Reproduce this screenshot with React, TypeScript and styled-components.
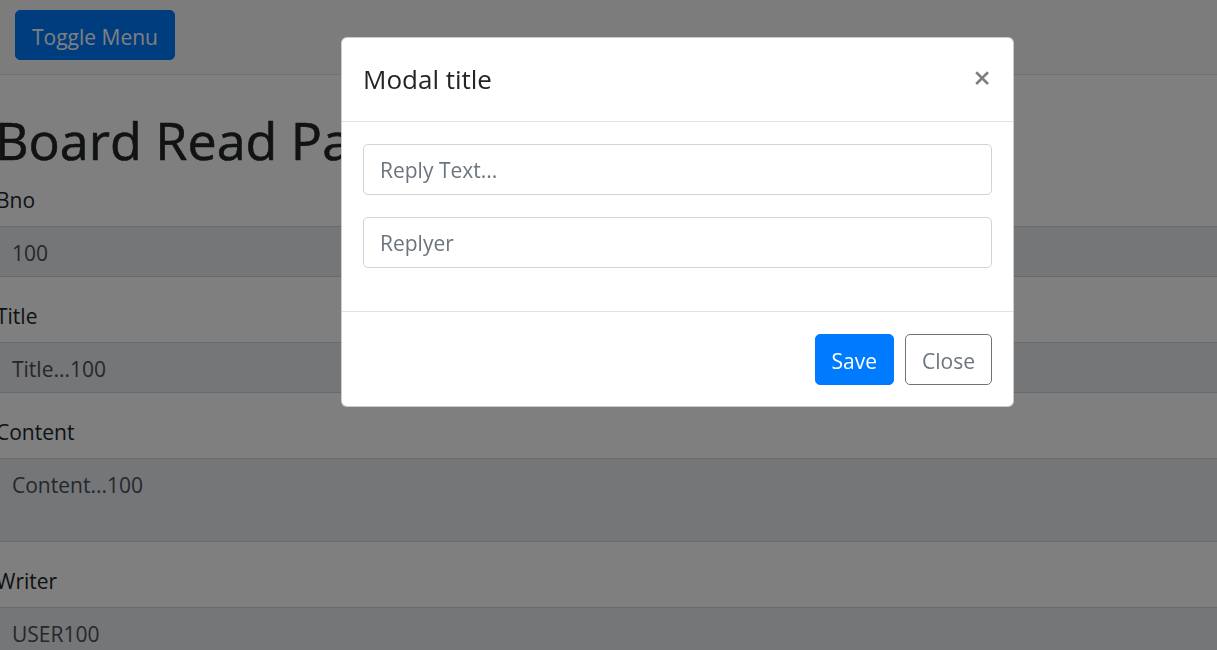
import React from "react";
import styled, { createGlobalStyle } from "styled-components";

const Global = createGlobalStyle`
  * { box-sizing: border-box; }
  html, body { margin: 0; padding: 0; height: 100%; overflow: hidden; }
  body {
    font-family: "Open Sans", "Noto Sans", sans-serif;
    font-size: 21px;
    line-height: 1.5;
    color: #212529;
    background: #fff;
  }
`;

const Navbar = styled.nav`
  height: 75px;
  background: #f8f9fa;
  border-bottom: 1px solid #dee2e6;
  padding: 10px 15px;
  display: flex;
  align-items: flex-start;
`;

const Button = styled.button<{ $variant: "primary" | "outline" }>`
  height: 51px;
  padding: 3px 16px 0;
  font-family: inherit;
  font-size: 21px;
  line-height: 1;
  border-radius: 5px;
  border: 1px solid ${(p) => (p.$variant === "primary" ? "#007bff" : "#6c757d")};
  background: ${(p) => (p.$variant === "primary" ? "#007bff" : "transparent")};
  color: ${(p) => (p.$variant === "primary" ? "#fff" : "#6c757d")};
  cursor: pointer;
`;

const ToggleButton = styled(Button)`
  width: 160px;
  height: 50px;
  padding-top: 4px;
`;

const Main = styled.main`
  margin: 0 -30px 0 -5px;
  padding-top: 33px;
`;

const Heading = styled.h1`
  font-size: 52px;
  font-weight: 500;
  line-height: 63px;
  margin: 0 0 13px;
  color: #212529;
  -webkit-text-stroke: 0.6px #212529;
`;

const FormGroup = styled.div<{ $mb?: number }>`
  margin-bottom: ${(p) => p.$mb ?? 23}px;
`;

const Label = styled.label`
  display: block;
  font-size: 21px;
  line-height: 32px;
  margin-bottom: 10px;
  padding-left: 1px;
`;

const Field = styled.div<{ $tall?: boolean }>`
  height: ${(p) => (p.$tall ? 84 : 51)}px;
  padding: 10px 16px 6px;
  font-size: 21px;
  line-height: 32px;
  color: #495057;
  background: #e9ecef;
  border: 1px solid #ced4da;
  border-radius: 5px;
`;

const Backdrop = styled.div`
  position: fixed;
  inset: 0;
  background: rgba(0, 0, 0, 0.5);
`;

const Modal = styled.div`
  position: fixed;
  top: 37px;
  left: 341px;
  width: 673px;
  background: #fff;
  border: 1px solid rgba(0, 0, 0, 0.2);
  border-radius: 6px;
  display: flex;
  flex-direction: column;
`;

const ModalHeader = styled.div`
  display: flex;
  align-items: flex-start;
  padding: 21px;
  border-bottom: 1px solid #dee2e6;
`;

const ModalTitle = styled.h5`
  margin: 0;
  font-size: 26px;
  font-weight: 400;
  line-height: 41px;
  color: #212529;
`;

const CloseX = styled.button`
  margin: -18px -20px -21px auto;
  padding: 21px;
  background: transparent;
  border: 0;
  font-family: inherit;
  font-size: 31px;
  font-weight: 600;
  line-height: 1;
  color: #000;
  opacity: 0.5;
`;

const ModalBody = styled.div`
  padding: 22px 21px 21px;
`;

const Input = styled.input`
  display: block;
  width: 100%;
  height: 51px;
  padding: 8px 16px;
  font-family: inherit;
  font-size: 21px;
  color: #495057;
  background: #fff;
  border: 1px solid #ced4da;
  border-radius: 5px;
  &::placeholder { color: #6c757d; }
`;

const ModalFooter = styled.div`
  display: flex;
  justify-content: flex-end;
  align-items: center;
  gap: 11px;
  padding: 22px 21px 21px;
  border-top: 1px solid #dee2e6;
`;

export default function App() {
  return (
    <>
      <Global />
      <Navbar>
        <ToggleButton $variant="primary">Toggle Menu</ToggleButton>
      </Navbar>
      <Main>
        <Heading>Board Read Page</Heading>
        <FormGroup>
          <Label>Bno</Label>
          <Field>100</Field>
        </FormGroup>
        <FormGroup>
          <Label>Title</Label>
          <Field>Title...100</Field>
        </FormGroup>
        <FormGroup>
          <Label>Content</Label>
          <Field $tall>Content...100</Field>
        </FormGroup>
        <FormGroup>
          <Label>Writer</Label>
          <Field>USER100</Field>
        </FormGroup>
      </Main>
      <Backdrop />
      <Modal>
        <ModalHeader>
          <ModalTitle>Modal title</ModalTitle>
          <CloseX aria-label="Close">×</CloseX>
        </ModalHeader>
        <ModalBody>
          <FormGroup $mb={22}>
            <Input placeholder="Reply Text..." />
          </FormGroup>
          <FormGroup $mb={22}>
            <Input placeholder="Replyer" />
          </FormGroup>
        </ModalBody>
        <ModalFooter>
          <Button $variant="primary">Save</Button>
          <Button $variant="outline">Close</Button>
        </ModalFooter>
      </Modal>
    </>
  );
}
